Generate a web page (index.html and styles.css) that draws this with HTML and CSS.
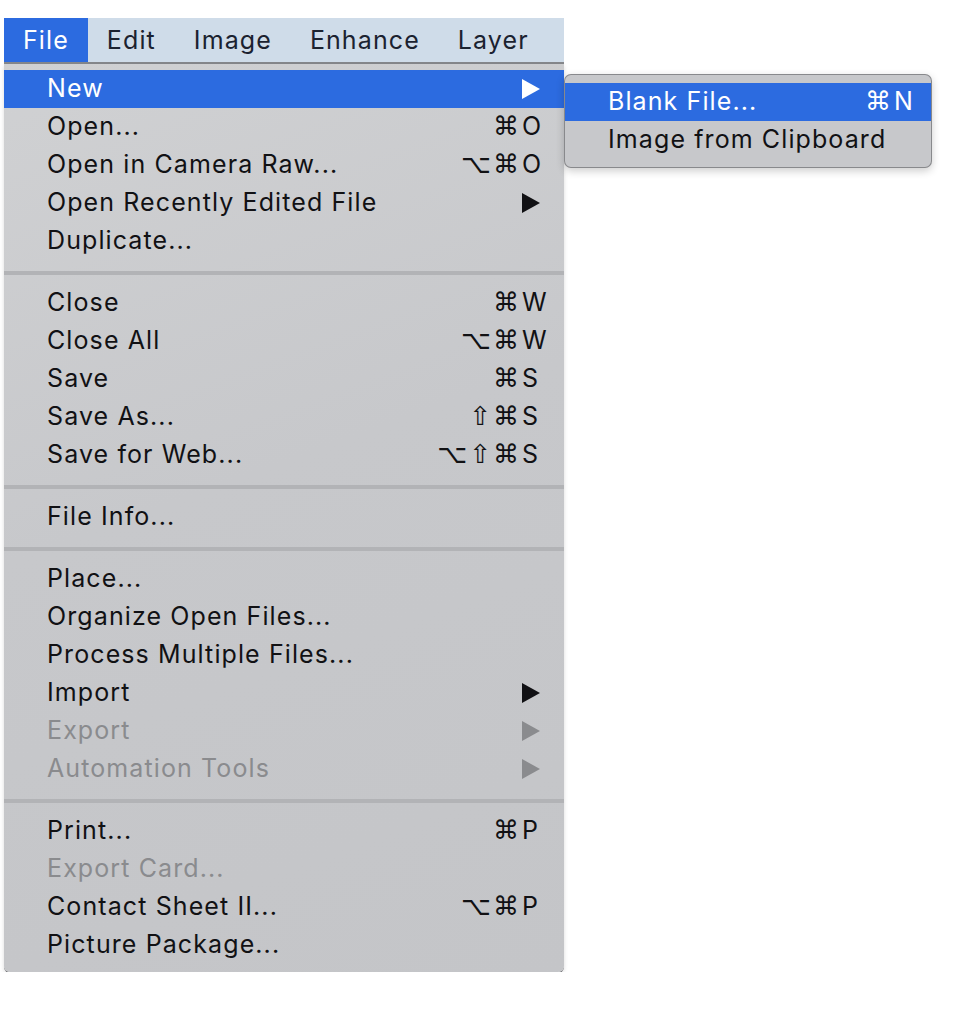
FILE: index.html
```html
<!DOCTYPE html>
<html>
<head>
<meta charset="utf-8">
<link rel="stylesheet" href="styles.css">
</head>
<body>
<div class="screen">
  <div class="menubar">
    <span class="mb-item active">File</span>
    <span class="mb-item">Edit</span>
    <span class="mb-item">Image</span>
    <span class="mb-item">Enhance</span>
    <span class="mb-item">Layer</span>
    <span class="mb-item">Select</span>
  </div>
  <div class="menu">
    <div class="item hl">
      <span class="label">New</span>
      <span class="mods"></span><span class="key"><span class="arrow"></span></span>
      <div class="submenu">
        <div class="item hl">
          <span class="label">Blank File...</span>
          <span class="mods">⌘</span><span class="key">N</span>
        </div>
        <div class="item">
          <span class="label">Image from Clipboard</span>
        </div>
      </div>
    </div>
    <div class="item"><span class="label">Open...</span><span class="mods">⌘</span><span class="key">O</span></div>
    <div class="item"><span class="label">Open in Camera Raw...</span><span class="mods">⌥⌘</span><span class="key">O</span></div>
    <div class="item"><span class="label">Open Recently Edited File</span><span class="mods"></span><span class="key"><span class="arrow"></span></span></div>
    <div class="item"><span class="label">Duplicate...</span></div>
    <div class="sep"></div>
    <div class="item"><span class="label">Close</span><span class="mods">⌘</span><span class="key">W</span></div>
    <div class="item"><span class="label">Close All</span><span class="mods">⌥⌘</span><span class="key">W</span></div>
    <div class="item"><span class="label">Save</span><span class="mods">⌘</span><span class="key">S</span></div>
    <div class="item"><span class="label">Save As...</span><span class="mods">⇧⌘</span><span class="key">S</span></div>
    <div class="item"><span class="label">Save for Web...</span><span class="mods">⌥⇧⌘</span><span class="key">S</span></div>
    <div class="sep"></div>
    <div class="item"><span class="label">File Info...</span></div>
    <div class="sep"></div>
    <div class="item"><span class="label">Place...</span></div>
    <div class="item"><span class="label">Organize Open Files...</span></div>
    <div class="item"><span class="label">Process Multiple Files...</span></div>
    <div class="item"><span class="label">Import</span><span class="mods"></span><span class="key"><span class="arrow"></span></span></div>
    <div class="item disabled"><span class="label">Export</span><span class="mods"></span><span class="key"><span class="arrow"></span></span></div>
    <div class="item disabled"><span class="label">Automation Tools</span><span class="mods"></span><span class="key"><span class="arrow"></span></span></div>
    <div class="sep"></div>
    <div class="item"><span class="label">Print...</span><span class="mods">⌘</span><span class="key">P</span></div>
    <div class="item disabled"><span class="label">Export Card...</span></div>
    <div class="item"><span class="label">Contact Sheet II...</span><span class="mods">⌥⌘</span><span class="key">P</span></div>
    <div class="item"><span class="label">Picture Package...</span></div>
  </div>
</div>
</body>
</html>
```

FILE: styles.css
```css
html, body {
  margin: 0;
  padding: 0;
  background: #ffffff;
}

.screen {
  padding: 18px 0 0 4px;
  width: 560px;
  font-family: Inter, "Liberation Sans", sans-serif;
  font-size: 25px;
  letter-spacing: 1.1px;
  color: #111114;
}

.menubar {
  display: flex;
  height: 44px;
  width: 560px;
  overflow: hidden;
  background: #cfdce9;
  border-bottom: 2px solid #86888c;
  white-space: nowrap;
}

.mb-item {
  flex: none;
  padding: 0 19px;
  line-height: 44px;
  color: #1b2230;
}

.mb-item.active {
  background: #2c6be0;
  color: #ffffff;
}

.menu {
  position: relative;
  width: 560px;
  padding: 6px 0 8px;
  background: linear-gradient(160deg, #d0d1d3 0%, #c7c8cb 45%, #c4c5c8 100%);
  border-radius: 0 0 6px 6px;
  box-shadow: 0 1px 0 #6d6e72, 0 2px 4px rgba(0, 0, 0, 0.15);
}

.item {
  position: relative;
  display: flex;
  align-items: center;
  height: 38px;
  padding-left: 43px;
  white-space: nowrap;
}

.item.hl {
  background: #2c6be0;
  color: #ffffff;
}

.item.disabled {
  color: #8a8b8e;
}

.label {
  flex: 1;
  padding-bottom: 3px;
}

.mods {
  font-family: "DejaVu Sans", sans-serif;
  font-size: 26px;
  letter-spacing: 2px;
  padding-bottom: 3px;
}

.key {
  width: 43px;
  padding-left: 1px;
  box-sizing: border-box;
  padding-bottom: 3px;
  display: flex;
  align-items: center;
}

.arrow {
  width: 0;
  height: 0;
  margin-top: 3px;
  border-top: 10px solid transparent;
  border-bottom: 10px solid transparent;
  border-left: 18px solid #111114;
}

.item.hl .arrow {
  border-left-color: #ffffff;
}

.item.disabled .arrow {
  border-left-color: #8a8b8e;
}

.sep {
  height: 4px;
  margin: 11px 0 9px;
  background: #b2b3b6;
}

.submenu {
  position: absolute;
  left: 100%;
  top: 4px;
  width: 368px;
  padding: 8px 0;
  background: #c7c8cb;
  color: #111114;
  border: 1px solid rgba(60, 60, 64, 0.45);
  border-radius: 7px;
  box-shadow: 0 3px 8px rgba(0, 0, 0, 0.2);
  box-sizing: border-box;
}

.submenu .item .key {
  width: 38px;
}
```
